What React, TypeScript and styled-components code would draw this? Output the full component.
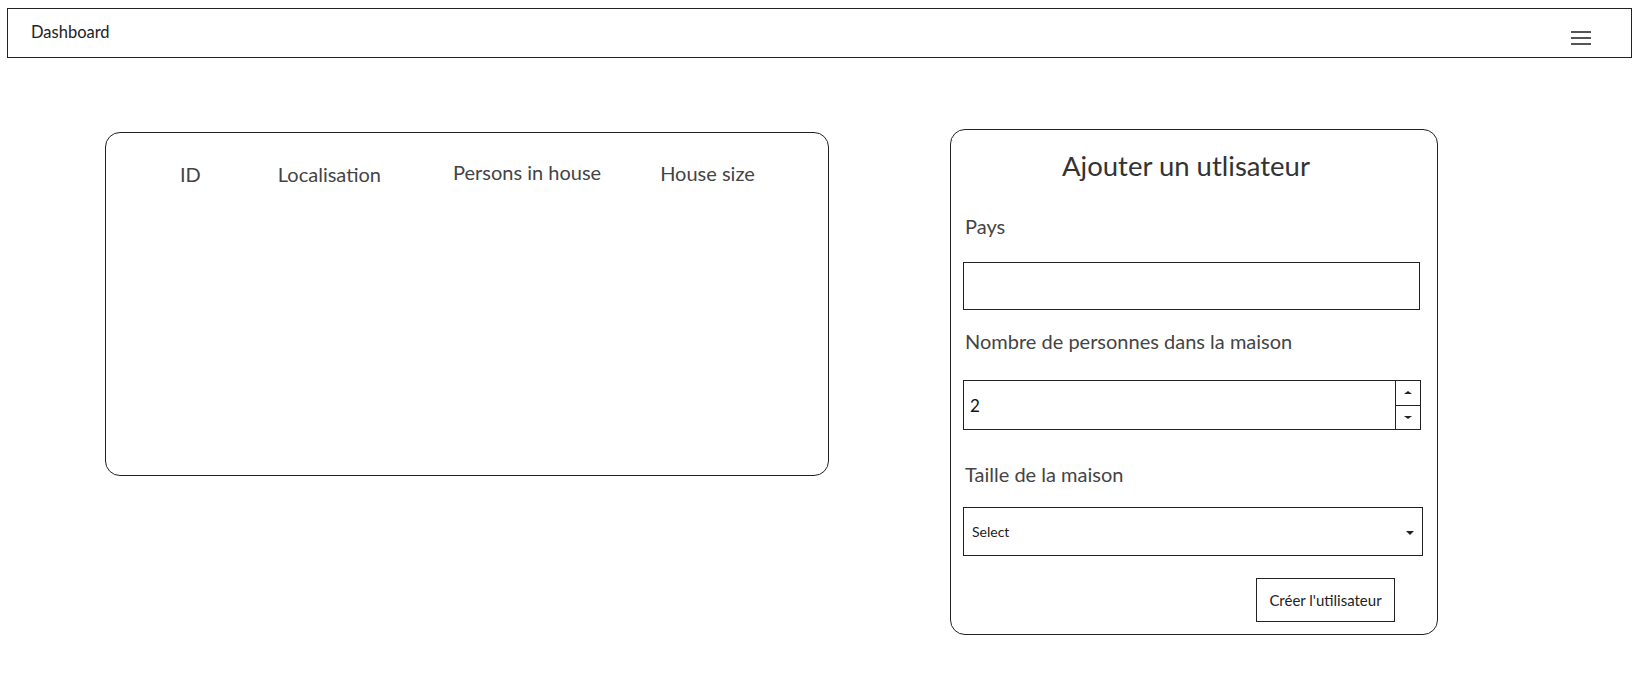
import React, { useState } from 'react';
import styled, { createGlobalStyle } from 'styled-components';

const GlobalStyle = createGlobalStyle`
  body {
    margin: 0;
    background: #fff;
    font-family: Lato, "Liberation Sans", sans-serif;
    color: #333;
  }
`;

const Page = styled.div`
  padding: 8px 8px 0 7px;
`;

const NavBar = styled.nav`
  display: flex;
  align-items: center;
  justify-content: space-between;
  height: 48px;
  border: 1px solid #222;
  padding: 0 40px 0 23px;
`;

const Brand = styled.span`
  margin-top: -2px;
  font-size: 16.5px;
  color: #222;
`;

const Burger = styled.button`
  display: flex;
  flex-direction: column;
  gap: 4px;
  width: 20px;
  padding: 0;
  margin-top: 10px;
  border: none;
  background: none;
  cursor: pointer;
  span {
    display: block;
    height: 2px;
    background: #555;
  }
`;

const Main = styled.main`
  display: flex;
  align-items: flex-start;
  gap: 121px;
  padding: 71px 0 0 98px;
`;

const Card = styled.section<{ $width: number; $height: number; $offset?: number }>`
  box-sizing: border-box;
  width: ${(p) => p.$width}px;
  height: ${(p) => p.$height}px;
  margin-top: ${(p) => p.$offset || 0}px;
  border: 1px solid #222;
  border-radius: 15px;
`;

const HeaderRow = styled.div`
  display: flex;
  padding: 29px 0 0 0;
`;

const HeaderCell = styled.span<{ $left: number; $lift?: number }>`
  margin-left: ${(p) => p.$left}px;
  margin-top: ${(p) => -(p.$lift || 0)}px;
  font-size: 20px;
  color: #444;
`;

const Form = styled.form`
  display: flex;
  flex-direction: column;
  padding: 0 12px 0 12px;
`;

const Title = styled.h2`
  margin: 19px 0 0;
  padding-right: 16px;
  text-align: center;
  font-size: 27.5px;
  font-weight: 400;
  color: #333;
`;

const Label = styled.label<{ $top: number }>`
  margin: ${(p) => p.$top}px 0 0 2px;
  font-size: 20px;
  color: #444;
`;

const TextInput = styled.input<{ $top: number }>`
  box-sizing: border-box;
  width: 457px;
  height: 48px;
  margin-top: ${(p) => p.$top}px;
  border: 1px solid #222;
  border-radius: 0;
  outline: none;
  font: inherit;
`;

const NumberBox = styled.div`
  display: flex;
  box-sizing: border-box;
  width: 458px;
  height: 50px;
  margin-top: 27px;
  border: 1px solid #222;
`;

const NumberValue = styled.input`
  flex: 1;
  min-width: 0;
  border: none;
  outline: none;
  padding: 0 0 0 6px;
  font-family: Lato, "Liberation Sans", sans-serif;
  font-size: 17px;
  color: #111;
  background: transparent;
`;

const Spinner = styled.div`
  display: flex;
  flex-direction: column;
  width: 24px;
  border-left: 1px solid #222;
`;

const SpinButton = styled.button<{ $down?: boolean }>`
  flex: 1;
  display: flex;
  align-items: center;
  justify-content: center;
  padding: 0;
  border: none;
  border-top: ${(p) => (p.$down ? '1px solid #222' : 'none')};
  background: #fff;
  cursor: pointer;
  &::after {
    content: '';
    border-left: 4px solid transparent;
    border-right: 4px solid transparent;
    ${(p) => (p.$down ? 'border-top: 3px solid #222;' : 'border-bottom: 3px solid #222;')}
  }
`;

const SelectBox = styled.div`
  display: flex;
  align-items: center;
  justify-content: space-between;
  box-sizing: border-box;
  width: 460px;
  height: 49px;
  margin-top: 21px;
  padding: 0 8px 0 8px;
  border: 1px solid #222;
  font-size: 14px;
  color: #222;
  cursor: pointer;
  &::after {
    content: '';
    margin-top: 2px;
    border-left: 4px solid transparent;
    border-right: 4px solid transparent;
    border-top: 4px solid #222;
  }
`;

const Actions = styled.div`
  display: flex;
  margin-top: 22px;
  padding-left: 293px;
`;

const SubmitButton = styled.button`
  box-sizing: border-box;
  width: 139px;
  height: 44px;
  border: 1px solid #222;
  border-radius: 0;
  background: #fff;
  font-family: Lato, "Liberation Sans", sans-serif;
  font-size: 15px;
  color: #222;
  cursor: pointer;
`;

const columns = [
  { title: 'ID', left: 74, lift: 0 },
  { title: 'Localisation', left: 77, lift: 0 },
  { title: 'Persons in house', left: 72, lift: 2 },
  { title: 'House size', left: 59, lift: 1 },
];

export default function App() {
  const [count, setCount] = useState(2);

  return (
    <Page>
      <GlobalStyle />
      <NavBar>
        <Brand>Dashboard</Brand>
        <Burger aria-label="menu">
          <span />
          <span />
          <span />
        </Burger>
      </NavBar>
      <Main>
        <Card $width={724} $height={344} $offset={3}>
          <HeaderRow>
            {columns.map((c) => (
              <HeaderCell key={c.title} $left={c.left} $lift={c.lift}>
                {c.title}
              </HeaderCell>
            ))}
          </HeaderRow>
        </Card>
        <Card $width={488} $height={506}>
          <Form onSubmit={(e) => e.preventDefault()}>
            <Title>Ajouter un utlisateur</Title>
            <Label $top={32}>Pays</Label>
            <TextInput $top={24} type="text" />
            <Label $top={19}>Nombre de personnes dans la maison</Label>
            <NumberBox>
              <NumberValue
                value={count}
                onChange={(e) => setCount(Number(e.target.value) || 0)}
              />
              <Spinner>
                <SpinButton type="button" onClick={() => setCount(count + 1)} />
                <SpinButton type="button" $down onClick={() => setCount(count - 1)} />
              </Spinner>
            </NumberBox>
            <Label $top={32}>Taille de la maison</Label>
            <SelectBox>Select</SelectBox>
            <Actions>
              <SubmitButton type="submit">Créer l'utilisateur</SubmitButton>
            </Actions>
          </Form>
        </Card>
      </Main>
    </Page>
  );
}
